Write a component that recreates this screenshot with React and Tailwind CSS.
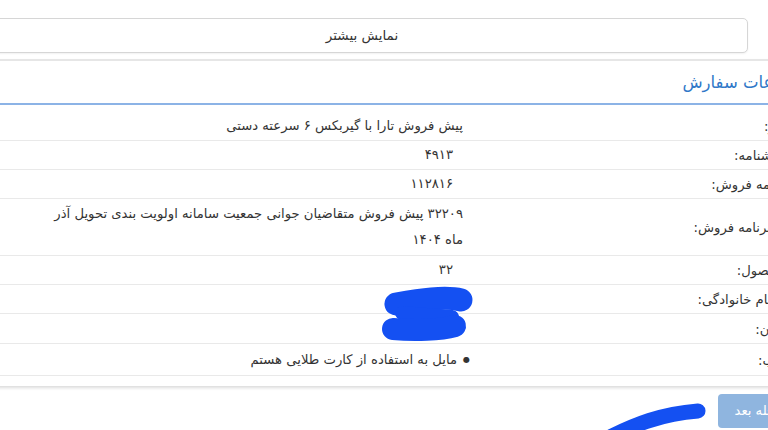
import React from "react";

const FONT = { fontFamily: '"DejaVu Sans", "Noto Sans", sans-serif' };

const rows = [
  { label: "خودرو:", value: "پیش فروش تارا با گیربکس ۶ سرعته دستی", h: "h-[30px]" },
  { label: "کد بخشنامه:", value: "۴۹۱۳", num: true, h: "h-[29px]" },
  { label: "بخشنامه فروش:", value: "۱۱۲۸۱۶", num: true, h: "h-[29px]" },
  { label: "شرح برنامه فروش:", value: "۳۲۲۰۹ پیش فروش متقاضیان جوانی جمعیت سامانه اولویت بندی تحویل آذر ماه ۱۴۰۴", h: "h-[57px]" },
  { label: "کد محصول:", value: "۳۲", num: true, h: "h-[29px]" },
  { label: "نام و نام خانوادگی:", value: "", h: "h-[29px]" },
  { label: "سازمان:", value: "", h: "h-[30px]" },
  { label: "انتساب:", value: "مایل به استفاده از کارت طلایی هستم", bullet: true, h: "h-[32px]" },
];

export default function App() {
  return (
    <div className="relative w-[768px] h-[430px] overflow-hidden bg-white text-[#333]" style={FONT}>
      <div dir="rtl" className="ml-[-24px] w-[830px]">
        <div className="pt-[18px] pr-[58px]">
          <button className="w-full h-[35px] border border-[#d6d6d6] rounded-[5px] bg-white text-[13.5px] text-[#333] shadow-[0_1px_2px_rgba(0,0,0,0.06)]">
            نمایش بیشتر
          </button>
        </div>
        <div className="mt-[6px] border-t-2 border-[#e6e6e6] pb-[10px] shadow-[0_2px_3px_rgba(0,0,0,0.14)]">
          <div className="h-[44px] flex items-center pt-[2px] pr-[5px] text-[16.5px] text-[#2f78c8] border-b-2 border-[#8cb3e6]">
            اطلاعات سفارش
          </div>
          <div className="pt-[6px]">
            {rows.map((r, i) => (
              <div key={i} className={`flex ${r.h} border-b border-[#e9e9e9]`}>
                <div className="w-[328px] flex items-center pr-[4px] pt-[2px] text-[13.2px] leading-[26px]">
                  {r.label}
                </div>
                <div
                  className={`flex-1 flex items-center pl-[58px] ${
                    r.num ? "pr-[25px]" : r.bullet ? "pr-[8px]" : "pr-[15px]"
                  } text-[13.2px] leading-[26px]`}
                >
                  {r.bullet ? (
                    <span className="flex items-center gap-[6px]">
                      <span className="text-[8px]">●</span>
                      <span>{r.value}</span>
                    </span>
                  ) : (
                    r.value
                  )}
                </div>
              </div>
            ))}
          </div>
        </div>
        <div className="flex pt-[8px]">
          <button className="h-[34px] w-[88px] flex items-center justify-center rounded-[4px] bg-[#8fb5df] text-white text-[13.2px]">
            مرحله بعد
          </button>
        </div>
      </div>
      <svg className="absolute inset-0 pointer-events-none" width="768" height="430" viewBox="0 0 768 430">
        <path d="M396 304 C 420 300, 445 296, 461 300" fill="none" stroke="#1450f2" strokeWidth="23" strokeLinecap="round" />
        <path d="M402 313 L 452 317" fill="none" stroke="#1450f2" strokeWidth="14" strokeLinecap="round" />
        <path d="M393 329 C 415 331, 440 330, 455 326" fill="none" stroke="#1450f2" strokeWidth="22" strokeLinecap="round" />
        <path d="M612 436 C 635 425, 660 414, 698 411" fill="none" stroke="#1450f2" strokeWidth="15" strokeLinecap="round" />
      </svg>
    </div>
  );
}
